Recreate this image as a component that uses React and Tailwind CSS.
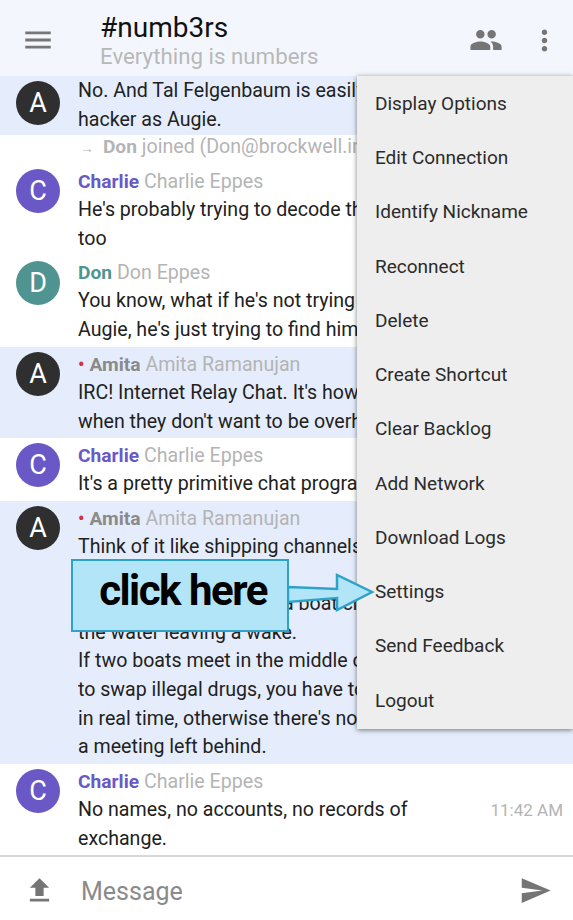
const menuItems = [
  "Display Options",
  "Edit Connection",
  "Identify Nickname",
  "Reconnect",
  "Delete",
  "Create Shortcut",
  "Clear Backlog",
  "Add Network",
  "Download Logs",
  "Settings",
  "Send Feedback",
  "Logout",
];

const Avatar = ({ letter, color }) => (
  <div
    className={`absolute left-4 top-[5px] w-11 h-11 rounded-full flex items-center justify-center text-white text-[27px] ${color}`}
  >
    {letter}
  </div>
);

const Message = ({ letter, avatar, nameColor, name, real, dot, lines, bg, className, wide, children }) => (
  <div className={`relative pl-[78px] whitespace-nowrap overflow-hidden ${bg} ${className}`}>
    {letter && <Avatar letter={letter} color={avatar} />}
    <div className={wide ? "" : "w-[279px] overflow-hidden"}>
      {name && (
        <div className="h-[29px] leading-[29px] text-[#b4b4b4]">
          {dot && <span className="text-[#d0343c] font-bold text-[18px] mr-[5px]">•</span>}
          <span className={`font-bold text-[19.2px] ${nameColor}`}>{name}</span> {real}
        </div>
      )}
      {lines.map((line) => (
        <div key={line} className="h-[28.6px] leading-[28.6px] text-[#212121]">
          {line}
        </div>
      ))}
    </div>
    {children}
  </div>
);

export default function App() {
  return (
    <div className="relative w-[573px] h-[920px] overflow-hidden bg-white text-[19.6px] font-['Roboto',sans-serif]">
      <header className="h-[76px] bg-[#f3f7fd] flex items-center pt-[4px]">
        <svg viewBox="0 0 24 24" className="ml-[21px] w-[34px] h-[34px] fill-[#757575] shrink-0">
          <path d="M3 18h18v-2H3v2zm0-5h18v-2H3v2zm0-7v2h18V6H3z" />
        </svg>
        <div className="ml-[45px] flex-1 pt-[3px]">
          <div className="text-[28px] leading-[29px] text-[#111111]">#numb3rs</div>
          <div className="text-[22.3px] leading-[29px] text-[#b8b8b8]">Everything is numbers</div>
        </div>
        <svg viewBox="0 0 24 24" className="w-[34px] h-[34px] fill-[#757575] mr-[25px] shrink-0">
          <path d="M16 11c1.66 0 2.99-1.34 2.99-3S17.66 5 16 5c-1.66 0-3 1.34-3 3s1.34 3 3 3zm-8 0c1.66 0 2.99-1.34 2.99-3S9.66 5 8 5C6.34 5 5 6.34 5 8s1.34 3 3 3zm0 2c-2.33 0-7 1.17-7 3.5V19h14v-2.5c0-2.33-4.67-3.5-7-3.5zm8 0c-.29 0-.62.02-.97.05 1.16.84 1.97 1.97 1.97 3.45V19h6v-2.5c0-2.33-4.67-3.5-7-3.5z" />
        </svg>
        <svg viewBox="0 0 24 24" className="w-[33px] h-[33px] fill-[#757575] mr-[12px] shrink-0">
          <path d="M12 8c1.1 0 2-.9 2-2s-.9-2-2-2-2 .9-2 2 .9 2 2 2zm0 2c-1.1 0-2 .9-2 2s.9 2 2 2 2-.9 2-2-.9-2-2-2zm0 6c-1.1 0-2 .9-2 2s.9 2 2 2 2-.9 2-2-.9-2-2-2z" />
        </svg>
      </header>

      <main className="h-[779px] overflow-hidden">
        <Message
          letter="A"
          avatar="bg-[#2f2f2f]"
          bg="bg-[#e5edfc]"
          className="h-[59px] pt-[1px]"
          lines={["No. And Tal Felgenbaum is easily as good a", "hacker as Augie."]}
        />
        <div className="h-[29px] leading-[24px] pl-[78px] w-[357px] overflow-hidden whitespace-nowrap text-[#b4b4b4]">
          <span className="text-[14px] mx-[2px] mr-[4px]">→</span>{" "}
          <span className="font-bold text-[19.2px]">Don</span> joined (Don@brockwell.in)
        </div>
        <Message
          letter="C"
          avatar="bg-[#6a58c6]"
          nameColor="text-[#6a58c6]"
          name="Charlie"
          real="Charlie Eppes"
          bg="bg-white"
          className="h-[92px] pt-[3px]"
          lines={["He's probably trying to decode the messages", "too"]}
        />
        <Message
          letter="D"
          avatar="bg-[#4f9491]"
          nameColor="text-[#4f9491]"
          name="Don"
          real="Don Eppes"
          bg="bg-white"
          className="h-[91px] pt-[2px]"
          lines={["You know, what if he's not trying to decode", "Augie, he's just trying to find him"]}
        />
        <Message
          letter="A"
          avatar="bg-[#2f2f2f]"
          nameColor="text-[#8a8a8a]"
          name="Amita"
          real="Amita Ramanujan"
          dot
          bg="bg-[#e5edfc]"
          className="h-[91px] pt-[3px]"
          lines={["IRC! Internet Relay Chat. It's how hackers talk", "when they don't want to be overheard"]}
        />
        <Message
          letter="C"
          avatar="bg-[#6a58c6]"
          nameColor="text-[#6a58c6]"
          name="Charlie"
          real="Charlie Eppes"
          bg="bg-white"
          className="h-[63px] pt-[3px]"
          lines={["It's a pretty primitive chat program"]}
        />
        <Message
          letter="A"
          avatar="bg-[#2f2f2f]"
          nameColor="text-[#8a8a8a]"
          name="Amita"
          real="Amita Ramanujan"
          dot
          bg="bg-[#e5edfc]"
          className="h-[263px] pt-[3px]"
          lines={[
            "Think of it like shipping channels at sea.",
            "Anyone can use them,",
            "and you could follow in a boat crossing",
            "the water leaving a wake.",
            "If two boats meet in the middle of the ocean",
            "to swap illegal drugs, you have to be there",
            "in real time, otherwise there's no trace of",
            "a meeting left behind.",
          ]}
        />
        <Message
          letter="C"
          avatar="bg-[#6a58c6]"
          nameColor="text-[#6a58c6]"
          name="Charlie"
          real="Charlie Eppes"
          bg="bg-white"
          className="h-[91px] pt-[3px]"
          wide
          lines={["No names, no accounts, no records of", "exchange."]}
        >
          <span className="absolute right-[10px] top-[32px] leading-[28px] text-[17px] text-[#b4b4b4]">11:42 AM</span>
        </Message>
      </main>

      <footer className="h-[65px] border-t-2 border-[#d8d8d8] flex items-center bg-white pt-[3px]">
        <svg viewBox="0 0 24 24" className="ml-[23px] w-[33px] h-[33px] fill-[#757575] shrink-0">
          <path d="M9 16h6v-6h4l-7-7-7 7h4zm-4 2h14v2H5z" />
        </svg>
        <span className="ml-[25px] flex-1 text-[25px] text-[#8a8a8a] pt-[3px]">Message</span>
        <svg viewBox="0 0 24 24" className="mr-[21px] w-[33px] h-[33px] fill-[#757575] shrink-0">
          <path d="M2.01 21 23 12 2.01 3 2 10l15 2-15 2z" />
        </svg>
      </footer>

      <div className="absolute left-[357px] top-[76px] w-[216px] h-[653px] bg-[#eeeeee] shadow-[0_1px_5px_rgba(0,0,0,0.5)] pt-[1px]">
        {menuItems.map((item) => (
          <div key={item} className="h-[54.25px] pl-[18px] flex items-center text-[19px] text-[#2b2b2b]">
            {item}
          </div>
        ))}
      </div>

      <div className="absolute left-[71px] top-[559px] w-[218px] h-[73px] bg-[#b3e5f8] border-[2.5px] border-[#2ea3c9] flex items-center justify-center pb-[10px] pl-[6px]">
        <span className="text-[42px] font-bold text-black tracking-[-1.5px]">click here</span>
      </div>
      <svg className="absolute left-[287px] top-[572px]" width="88" height="40" viewBox="0 0 88 40">
        <path d="M1 15 L50 17 L50 3 L85 20 L50 38 L50 26 L1 30 Z" fill="#b3e5f8" stroke="#2ea3c9" strokeWidth="2.5" />
      </svg>
    </div>
  );
}
